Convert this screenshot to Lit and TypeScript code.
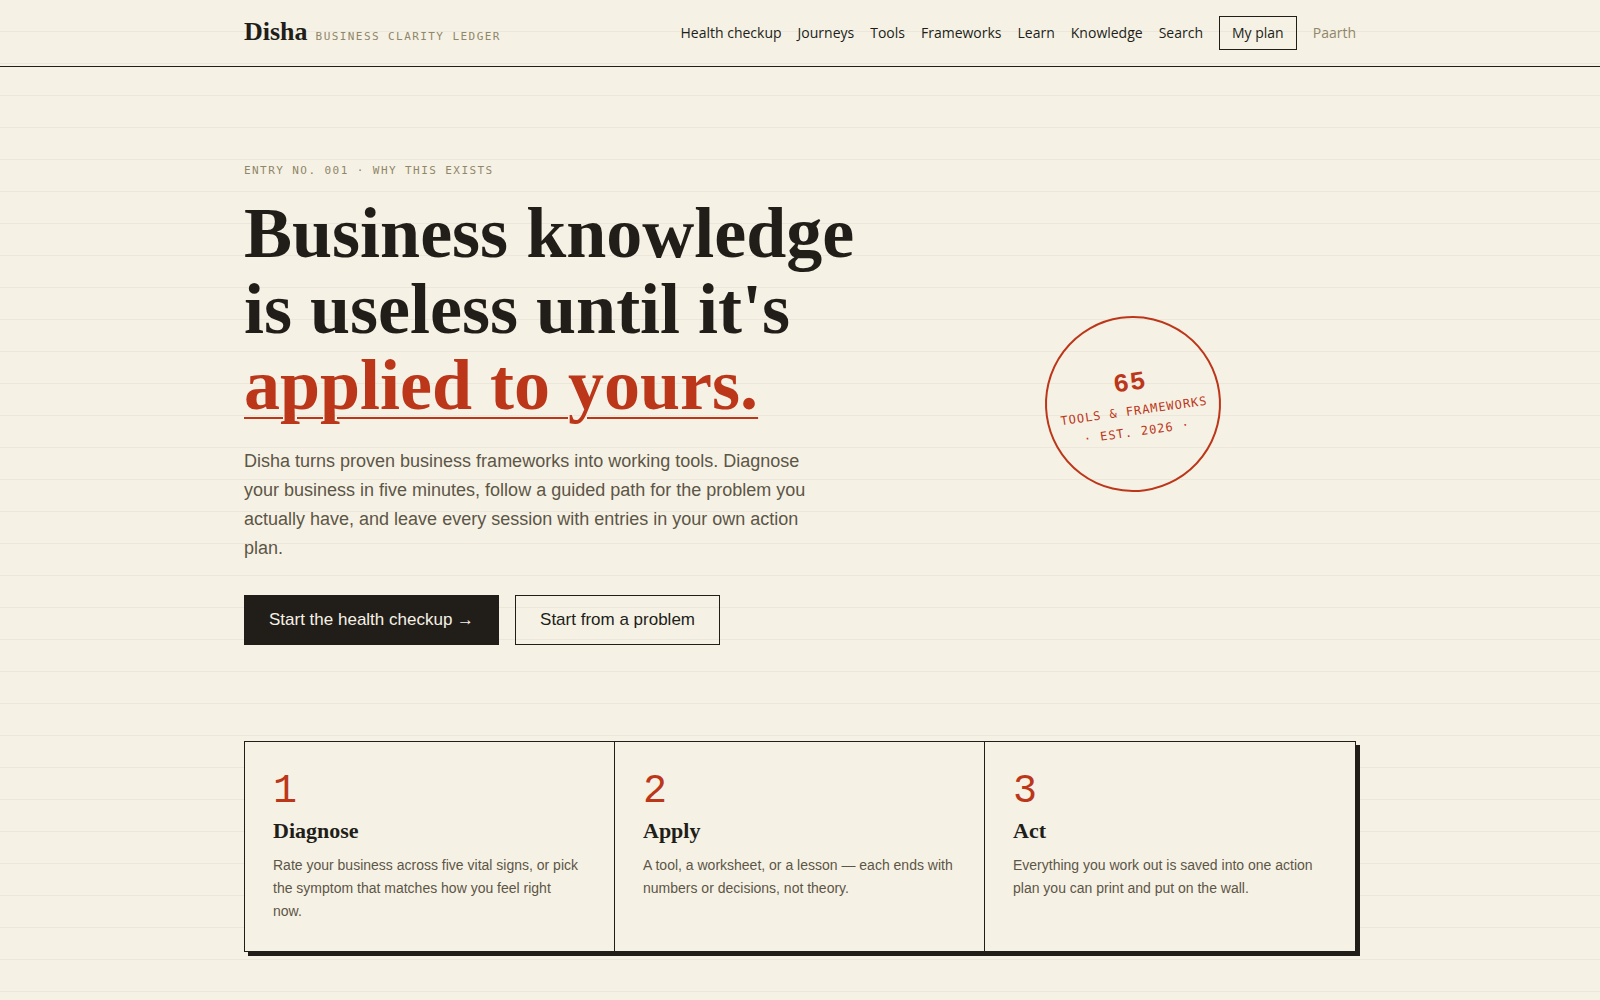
import { LitElement, html, css } from "lit";
import { customElement } from "lit/decorators.js";

interface Step {
  title: string;
  text: string;
}

const NAV_LINKS = ["Health checkup", "Journeys", "Tools", "Frameworks", "Learn", "Knowledge", "Search"];

const STEPS: Step[] = [
  {
    title: "Diagnose",
    text: "Rate your business across five vital signs, or pick the symptom that matches how you feel right\nnow.",
  },
  {
    title: "Apply",
    text: "A tool, a worksheet, or a lesson — each ends with numbers or decisions, not theory.",
  },
  {
    title: "Act",
    text: "Everything you work out is saved into one action plan you can print and put on the wall.",
  },
];

@customElement("app-root")
export class AppRoot extends LitElement {
  static styles = css`
    :host {
      --paper: #f6f1e5;
      --rule: #ece7da;
      --ink: #211e19;
      --soft: #5c5646;
      --muted: #8f8769;
      --red: #bc3719;
      --sans: "Liberation Sans", Arial, sans-serif;
      --serif: "Liberation Serif", "Times New Roman", serif;
      --mono: "DejaVu Sans Mono", "Liberation Mono", monospace;
      --figures: "Liberation Mono", "Courier New", monospace;
      display: block;
      min-height: 100vh;
      color: var(--ink);
      font-family: var(--sans);
      background: repeating-linear-gradient(
        to bottom,
        var(--paper) 0,
        var(--paper) 31px,
        var(--rule) 31px,
        var(--rule) 32px
      );
    }
    * {
      box-sizing: border-box;
    }
    h1,
    h2,
    p,
    ol {
      margin: 0;
      padding: 0;
    }
    a {
      color: inherit;
      text-decoration: none;
    }
    .wrap {
      max-width: 1160px;
      margin: 0 auto;
      padding: 0 24px;
    }
    .top {
      border-bottom: 1px solid var(--ink);
    }
    .bar {
      display: flex;
      flex-wrap: wrap;
      align-items: center;
      justify-content: space-between;
      gap: 16px;
      padding-top: 16px;
      padding-bottom: 16px;
    }
    .brand {
      display: flex;
      align-items: baseline;
      gap: 8px;
      padding-bottom: 2px;
    }
    .name {
      font: 700 26px/32px var(--serif);
    }
    .label {
      font: 400 11px/16px var(--mono);
      letter-spacing: 0.13em;
      text-transform: uppercase;
      color: var(--muted);
    }
    .nav {
      display: flex;
      flex-wrap: wrap;
      align-items: center;
      gap: 16px;
      font: 400 14px/20px "Open Sans", var(--sans);
    }
    .plan {
      padding: 6px 12px;
      border: 1px solid var(--ink);
      font-weight: 500;
    }
    .user {
      color: var(--muted);
    }
    .hero {
      display: grid;
      grid-template-columns: 1.4fr 1fr;
      align-items: center;
      gap: 40px;
      padding-top: 96px;
      padding-bottom: 96px;
    }
    .headline {
      margin: 16px 0 24px;
      font: 700 72px/76px var(--serif);
    }
    .accent {
      color: var(--red);
      text-decoration: underline;
      text-decoration-thickness: 2px;
      text-underline-offset: 8px;
    }
    .line {
      display: block;
      white-space: nowrap;
    }
    .lead {
      max-width: 580px;
      font-size: 18px;
      line-height: 29px;
      color: var(--soft);
    }
    .actions {
      display: flex;
      flex-wrap: wrap;
      gap: 16px;
      margin-top: 32px;
    }
    .btn {
      padding: 12px 24px;
      border: 1px solid var(--ink);
      font-size: 17px;
      line-height: 24px;
    }
    .solid {
      background: var(--ink);
      color: var(--paper);
    }
    .stamp {
      justify-self: center;
      display: flex;
      flex-direction: column;
      justify-content: center;
      width: 176px;
      height: 176px;
      border: 2px solid var(--red);
      border-radius: 50%;
      color: var(--red);
      font: 400 12px/21px var(--mono);
      letter-spacing: 1px;
      text-align: center;
      text-transform: uppercase;
      transform: rotate(-8deg);
    }
    .count {
      font: 700 26px/36px var(--figures);
    }
    .steps {
      display: grid;
      grid-template-columns: repeat(3, 1fr);
      list-style: none;
      border: 1px solid var(--ink);
      background: var(--paper);
      box-shadow: 4px 4px 0 var(--ink);
    }
    .step {
      padding: 28px;
    }
    .step:not(:last-child) {
      border-right: 1px solid var(--ink);
    }
    .num {
      font: 400 40px/44px var(--figures);
      color: var(--red);
    }
    .title {
      font: 700 22px/34px var(--serif);
    }
    .text {
      margin-top: 6px;
      font-size: 14px;
      line-height: 23px;
      white-space: pre-line;
      color: var(--soft);
    }
    .end {
      padding-bottom: 48px;
    }
  `;

  render() {
    return html`
      <header class="top">
        <div class="wrap bar">
          <a class="brand" href="#home">
            <span class="name">Disha</span>
            <span class="label">Business clarity ledger</span>
          </a>
          <nav class="nav" aria-label="Main">
            ${NAV_LINKS.map((name) => html`<a href="#${name.toLowerCase().replace(" ", "-")}">${name}</a>`)}
            <a class="plan" href="#plan">My plan</a>
            <a class="user" href="#account">Paarth</a>
          </nav>
        </div>
      </header>
      <main>
        <section class="wrap hero">
          <div>
            <p class="label">Entry No. 001 · Why this exists</p>
            <h1 class="headline">
              <span class="line">Business knowledge</span>
              <span class="line">is useless until it's</span>
              <span class="accent">applied to yours.</span>
            </h1>
            <p class="lead">
              Disha turns proven business frameworks into working tools. Diagnose your business in five minutes,
              follow a guided path for the problem you actually have, and leave every session with entries in your
              own action plan.
            </p>
            <div class="actions">
              <a class="btn solid" href="#checkup">Start the health checkup →</a>
              <a class="btn" href="#problem">Start from a problem</a>
            </div>
          </div>
          <div class="stamp">
            <span class="count">65</span>
            <span>Tools &amp; frameworks</span>
            <span>· Est. 2026 ·</span>
          </div>
        </section>
        <section class="wrap end">
          <ol class="steps">
            ${STEPS.map(
              (step, i) => html`
                <li class="step">
                  <div class="num">${i + 1}</div>
                  <h2 class="title">${step.title}</h2>
                  <p class="text">${step.text}</p>
                </li>
              `,
            )}
          </ol>
        </section>
      </main>
    `;
  }
}
